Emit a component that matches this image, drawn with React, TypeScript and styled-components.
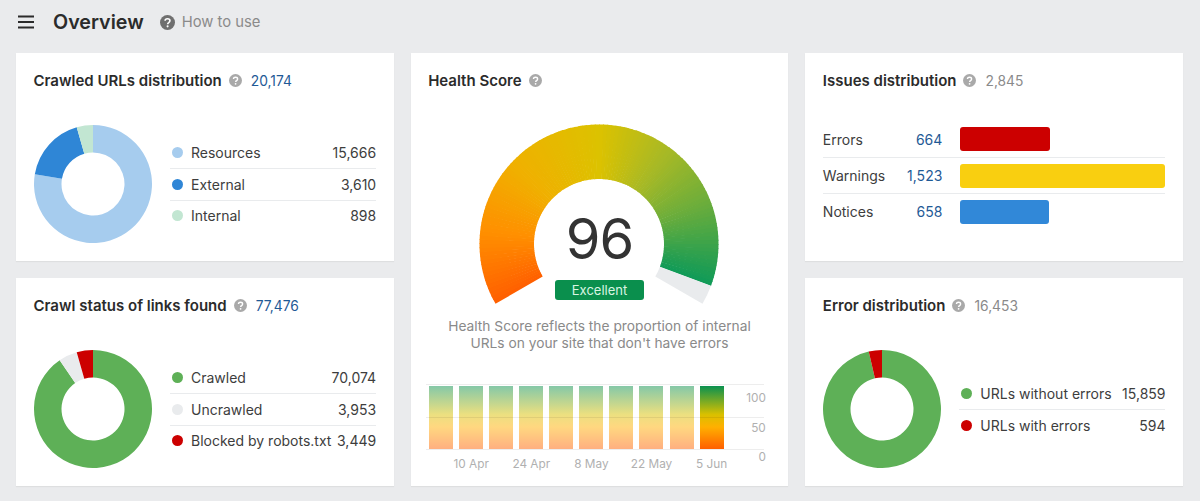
import styled, { createGlobalStyle } from "styled-components";

const GlobalStyle = createGlobalStyle`
  html, body {
    margin: 0;
    height: 501px;
    overflow: hidden;
    background: #eaebed;
    font-family: Inter, "Liberation Sans", sans-serif;
  }
  * {
    box-sizing: border-box;
  }
`;

const Page = styled.div`
  width: 1200px;
  height: 501px;
  padding: 0 17px 0 16px;
`;

const Header = styled.header`
  height: 53px;
  display: flex;
  align-items: center;
  padding: 0 0 9px 2px;
`;

const PageTitle = styled.h1`
  margin: 0 16px 0 19px;
  font-size: 19.7px;
  line-height: 24px;
  font-weight: 600;
  color: #2b2b2b;
`;

const HowTo = styled.span`
  margin-left: 7px;
  font-size: 14.8px;
  color: #8a8a8a;
`;

const Grid = styled.main`
  display: grid;
  grid-template-columns: repeat(3, 1fr);
  grid-template-rows: 208px 208px;
  gap: 17px;
`;

const Card = styled.section`
  background: #fff;
  padding: 17.5px 17.5px 0;
  box-shadow: 0 1px 1px rgba(0, 0, 0, 0.05);
`;

const TallCard = styled(Card)`
  grid-column: 2;
  grid-row: 1 / span 2;
`;

const TitleRow = styled.div`
  display: flex;
  align-items: center;
  height: 20px;
`;

const CardTitle = styled.h2`
  margin: 0 7px 0 0;
  font-size: 15px;
  line-height: 20px;
  font-weight: 600;
  color: #2b2b2b;
`;

const Count = styled.span<{ $link?: boolean }>`
  margin-left: 9px;
  font-size: 13.8px;
  color: ${(p) => (p.$link ? "#1f5a96" : "#8a8a8a")};
`;

const DonutBody = styled.div`
  display: flex;
  align-items: center;
  gap: 18.5px;
  margin-top: 34.5px;
`;

const Legend = styled.div`
  flex: 1;
  min-width: 0;
`;

const LegendRow = styled.div`
  display: flex;
  align-items: center;
  height: 31.3px;
  padding-left: 1.5px;
  font-size: 14px;
  color: #3d3d3d;

  & + & {
    border-top: 1px solid #e9ebed;
  }
`;

const Dot = styled.span<{ $color: string }>`
  width: 11px;
  height: 11px;
  margin-right: 8.5px;
  border-radius: 50%;
  background: ${(p) => p.$color};
`;

const LegendValue = styled.span`
  margin-left: auto;
`;

const IssueList = styled.div`
  margin-top: 30.5px;
`;

const IssueRow = styled.div`
  display: grid;
  grid-template-columns: 119.5px 1fr;
  column-gap: 18px;
  align-items: center;
  height: 36px;
  font-size: 14px;
  color: #3d3d3d;

  & + & {
    border-top: 1px solid #e9ebed;
  }
`;

const IssueLabel = styled.div`
  display: flex;
  justify-content: space-between;
`;

const IssueValue = styled.span`
  color: #1f5a96;
`;

const IssueBar = styled.div<{ $color: string }>`
  height: 24px;
  border-radius: 3px;
  background: ${(p) => p.$color};
`;

const GaugeWrap = styled.div`
  position: relative;
  width: 240px;
  height: 180px;
  margin: 33.5px auto 0;
`;

const Score = styled.div`
  position: absolute;
  top: 79px;
  left: 0;
  right: 0;
  text-align: center;
  font-size: 56px;
  letter-spacing: -1px;
  line-height: 72px;
  font-weight: 400;
  color: #333;
`;

const Badge = styled.div`
  position: absolute;
  top: 156px;
  left: 75.5px;
  width: 89px;
  height: 20px;
  border-radius: 3px;
  background: #0a8f4d;
  color: #d9f5e2;
  font-size: 13px;
  line-height: 20px;
  text-align: center;
`;

const Description = styled.p`
  margin: 14px 0 0;
  font-size: 13.75px;
  line-height: 17px;
  text-align: center;
  color: #8a8a8a;
`;

const Chart = styled.div`
  position: relative;
  display: flex;
  margin: 32px 7px 0 -2px;
  padding-top: 2px;
`;

const GridLines = styled.div`
  position: absolute;
  top: 0;
  left: 0;
  right: 0;
  height: 66px;
  display: flex;
  flex-direction: column;
  justify-content: space-between;
  pointer-events: none;
`;

const GridLine = styled.div`
  height: 1px;
  background: rgba(0, 0, 0, 0.07);
`;

const Columns = styled.div`
  display: grid;
  grid-template-columns: repeat(10, 24px);
  column-gap: 6.05px;
  grid-template-rows: 63px auto;
  padding-left: 3px;
`;

const HealthBar = styled.div<{ $faded?: boolean }>`
  background: linear-gradient(
    to bottom,
    #0a9150 0%,
    #d8c000 45%,
    #ffb000 65%,
    #ff5f00 100%
  );
  opacity: ${(p) => (p.$faded ? 0.5 : 1)};
`;

const DateLabel = styled.div<{ $col: number }>`
  grid-row: 2;
  grid-column: ${(p) => p.$col};
  display: flex;
  justify-content: center;
  margin-top: 7px;
  font-size: 11.8px;
  line-height: 16px;
  white-space: nowrap;
  color: #b0b0b0;
`;

const Axis = styled.div`
  flex: 1;
  height: 79px;
  margin-right: -2px;
  padding-top: 4px;
  display: flex;
  flex-direction: column;
  justify-content: space-between;
  align-items: flex-end;
  font-size: 11.8px;
  line-height: 16px;
  color: #b0b0b0;
`;

const HelpIcon = ({ size = 13, color = "#a9a9a9" }: { size?: number; color?: string }) => (
  <svg width={size} height={size} viewBox="0 0 16 16" style={{ flex: "none" }}>
    <circle cx="8" cy="8" r="8" fill={color} />
    <path
      d="M5.4 6.2C5.5 4.8 6.6 4 8 4c1.5 0 2.6.9 2.6 2.2 0 1-.6 1.5-1.3 2-.6.4-1.1.8-1.1 1.6"
      fill="none"
      stroke="#fff"
      strokeWidth="1.7"
    />
    <circle cx="8.1" cy="12.1" r="1.1" fill="#fff" />
  </svg>
);

const MenuIcon = () => (
  <svg width="16" height="14" viewBox="0 0 16 14" style={{ flex: "none" }}>
    <path d="M0 1.5h16M0 7h16M0 12.5h16" stroke="#2b2b2b" strokeWidth="2" />
  </svg>
);

function point(cx: number, cy: number, r: number, deg: number) {
  // deg is clockwise from 12 o'clock
  const a = ((deg - 90) * Math.PI) / 180;
  return [cx + r * Math.cos(a), cy + r * Math.sin(a)];
}

function ringSlice(cx: number, cy: number, outer: number, inner: number, from: number, to: number) {
  const large = to - from > 180 ? 1 : 0;
  const [x1, y1] = point(cx, cy, outer, from);
  const [x2, y2] = point(cx, cy, outer, to);
  const [x3, y3] = point(cx, cy, inner, to);
  const [x4, y4] = point(cx, cy, inner, from);
  return `M${x1} ${y1}A${outer} ${outer} 0 ${large} 1 ${x2} ${y2}L${x3} ${y3}A${inner} ${inner} 0 ${large} 0 ${x4} ${y4}Z`;
}

type Item = { label: string; value: number; color: string };

const Donut = ({ items }: { items: Item[] }) => {
  const total = items.reduce((sum, i) => sum + i.value, 0);
  let angle = 0;
  return (
    <svg width="118" height="118" viewBox="0 0 118 118" style={{ flex: "none" }}>
      {items.map((item) => {
        const from = angle;
        angle += (item.value / total) * 360;
        return <path key={item.label} d={ringSlice(59, 59, 59, 31.5, from, angle)} fill={item.color} />;
      })}
    </svg>
  );
};

const gaugeStops: [number, number[]][] = [
  [0, [255, 95, 0]],
  [0.15, [255, 143, 0]],
  [0.3, [240, 176, 0]],
  [0.5, [220, 194, 0]],
  [0.65, [168, 185, 37]],
  [0.78, [111, 174, 58]],
  [0.96, [15, 154, 88]],
];

function gaugeColor(t: number) {
  for (let i = 1; i < gaugeStops.length; i++) {
    const [t0, c0] = gaugeStops[i - 1];
    const [t1, c1] = gaugeStops[i];
    if (t <= t1) {
      const k = (t - t0) / (t1 - t0);
      const c = c0.map((v, n) => Math.round(v + (c1[n] - v) * k));
      return `rgb(${c.join(",")})`;
    }
  }
  return "rgb(15,154,88)";
}

const Gauge = ({ score }: { score: number }) => {
  const start = -120;
  const sweep = 240;
  const end = start + (sweep * score) / 100;
  const step = 2;
  const slices = [];
  for (let a = start; a < end; a += step) {
    const to = Math.min(a + step + 0.4, end);
    slices.push(
      <path
        key={a}
        d={ringSlice(120, 120, 119.5, 65, a, to)}
        fill={gaugeColor((a + step / 2 - start) / sweep)}
      />
    );
  }
  return (
    <svg width="240" height="180" viewBox="0 0 240 180">
      {slices}
      <path d={ringSlice(120, 120, 119.5, 65, end, start + sweep)} fill="#e9ebed" />
    </svg>
  );
};

const crawled: Item[] = [
  { label: "Resources", value: 15666, color: "#a6ccee" },
  { label: "External", value: 3610, color: "#2f86d6" },
  { label: "Internal", value: 898, color: "#c2e6d2" },
];

const linkStatus: Item[] = [
  { label: "Crawled", value: 70074, color: "#5eb057" },
  { label: "Uncrawled", value: 3953, color: "#e9ebed" },
  { label: "Blocked by robots.txt", value: 3449, color: "#cc0000" },
];

const errors: Item[] = [
  { label: "URLs without errors", value: 15859, color: "#5eb057" },
  { label: "URLs with errors", value: 594, color: "#cc0000" },
];

const issues: Item[] = [
  { label: "Errors", value: 664, color: "#cc0000" },
  { label: "Warnings", value: 1523, color: "#f9cf10" },
  { label: "Notices", value: 658, color: "#3188d8" },
];

const dates = ["10 Apr", "24 Apr", "8 May", "22 May", "5 Jun"];

const DonutCard = ({ title, count, link, items }: { title: string; count: string; link?: boolean; items: Item[] }) => (
  <Card>
    <TitleRow>
      <CardTitle>{title}</CardTitle>
      <HelpIcon />
      <Count $link={link}>{count}</Count>
    </TitleRow>
    <DonutBody>
      <Donut items={items} />
      <Legend>
        {items.map((item) => (
          <LegendRow key={item.label}>
            <Dot $color={item.color} />
            {item.label}
            <LegendValue>{item.value.toLocaleString("en-US")}</LegendValue>
          </LegendRow>
        ))}
      </Legend>
    </DonutBody>
  </Card>
);

export default function App() {
  const maxIssue = Math.max(...issues.map((i) => i.value));
  return (
    <Page>
      <GlobalStyle />
      <Header>
        <MenuIcon />
        <PageTitle>Overview</PageTitle>
        <HelpIcon size={15} color="#6f6f6f" />
        <HowTo>How to use</HowTo>
      </Header>
      <Grid>
        <DonutCard title="Crawled URLs distribution" count="20,174" link items={crawled} />
        <TallCard>
          <TitleRow>
            <CardTitle>Health Score</CardTitle>
            <HelpIcon />
          </TitleRow>
          <GaugeWrap>
            <Gauge score={96} />
            <Score>96</Score>
            <Badge>Excellent</Badge>
          </GaugeWrap>
          <Description>
            Health Score reflects the proportion of internal
            <br />
            URLs on your site that don't have errors
          </Description>
          <Chart>
            <Columns>
              {Array.from({ length: 10 }, (_, i) => (
                <HealthBar key={i} $faded={i < 9} />
              ))}
              {dates.map((d, i) => (
                <DateLabel key={d} $col={(i + 1) * 2}>
                  {d}
                </DateLabel>
              ))}
            </Columns>
            <Axis>
              <span>100</span>
              <span>50</span>
              <span>0</span>
            </Axis>
            <GridLines>
              <GridLine />
              <GridLine />
              <GridLine />
            </GridLines>
          </Chart>
        </TallCard>
        <Card>
          <TitleRow>
            <CardTitle>Issues distribution</CardTitle>
            <HelpIcon />
            <Count>2,845</Count>
          </TitleRow>
          <IssueList>
            {issues.map((item) => (
              <IssueRow key={item.label}>
                <IssueLabel>
                  {item.label}
                  <IssueValue>{item.value.toLocaleString("en-US")}</IssueValue>
                </IssueLabel>
                <IssueBar $color={item.color} style={{ width: `${(item.value / maxIssue) * 100}%` }} />
              </IssueRow>
            ))}
          </IssueList>
        </Card>
        <DonutCard title="Crawl status of links found" count="77,476" link items={linkStatus} />
        <DonutCard title="Error distribution" count="16,453" items={errors} />
      </Grid>
    </Page>
  );
}
